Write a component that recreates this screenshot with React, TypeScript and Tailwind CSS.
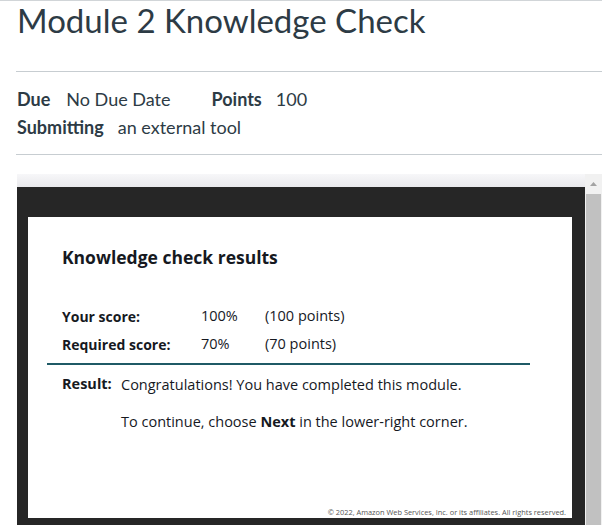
import React from "react";

const card = "font-['Open_Sans','Noto_Sans',sans-serif] text-[#16191f]";

function ScoreRow({ label, pct, pts }: { label: string; pct: string; pts: string }) {
  return (
    <div className="flex h-[28px] items-center text-[14.5px]">
      <span className="w-[139px] text-[14px] font-bold">{label}</span>
      <span className="w-[64px]">{pct}</span>
      <span>{pts}</span>
    </div>
  );
}

export default function App() {
  return (
    <div className="h-[525px] w-[602px] overflow-hidden border-t border-[#d1d5d8] bg-white font-['Lato',sans-serif] text-[#2d3b45]">
      <div className="pl-[16px]">
        <h1 className="pl-[1px] text-[33px] font-normal leading-[38px]">Module 2 Knowledge Check</h1>
        <div className="mt-[32px] border-t border-[#c7cdd1]" />
        <div className="pl-[1px] pt-[13px] text-[18px]">
          <div className="flex h-[28px] items-center">
            <span className="font-bold">Due</span>
            <span className="ml-[16px]">No Due Date</span>
            <span className="ml-[41px] font-bold">Points</span>
            <span className="ml-[14px]">100</span>
          </div>
          <div className="flex h-[28px] items-center">
            <span className="font-bold">Submitting</span>
            <span className="ml-[14px]">an external tool</span>
          </div>
        </div>
        <div className="mt-[13px] border-t border-[#c7cdd1]" />
      </div>

      <div className="ml-[17px] mt-[19px] flex h-[360px]">
        <div className="flex flex-1 flex-col">
          <div className="h-[13px] bg-gradient-to-b from-[#f7f7f9] to-[#e9e9ec]" />
          <div className="flex-1 bg-[#262626] pl-[11px] pr-[13px] pt-[30px]">
            <div className={`relative h-[301px] bg-white ${card}`}>
              <h2 className="pl-[34px] pt-[29px] text-[17.5px] font-bold leading-[22px]">Knowledge check results</h2>
              <div className="pl-[34px] pt-[34px]">
                <ScoreRow label="Your score:" pct="100%" pts="(100 points)" />
                <ScoreRow label="Required score:" pct="70%" pts="(70 points)" />
              </div>
              <div className="ml-[19px] mt-[5px] w-[483px] border-t-2 border-[#1f5a66]" />
              <div className="flex pl-[34px] pt-[8px] text-[14.5px]">
                <span className="w-[59px] font-bold">Result:</span>
                <div>
                  <p className="leading-[24px]">Congratulations! You have completed this module.</p>
                  <p className="mt-[13px] leading-[24px]">
                    To continue, choose <b>Next</b> in the lower-right corner.
                  </p>
                </div>
              </div>
              <p className="absolute bottom-[0px] right-[6px] text-[7.4px] text-[#555]">
                © 2022, Amazon Web Services, Inc. or its affiliates. All rights reserved.
              </p>
            </div>
          </div>
        </div>
        <div className="flex w-[17px] flex-col bg-[#f1f1f1] px-[1px]">
          <div className="flex h-[20px] items-center justify-center">
            <svg width="7" height="4" viewBox="0 0 7 4">
              <path d="M0 4 L3.5 0 L7 4 Z" fill="#a3a3a3" />
            </svg>
          </div>
          <div className="flex-1 bg-[#c1c1c1]" />
        </div>
      </div>
    </div>
  );
}
